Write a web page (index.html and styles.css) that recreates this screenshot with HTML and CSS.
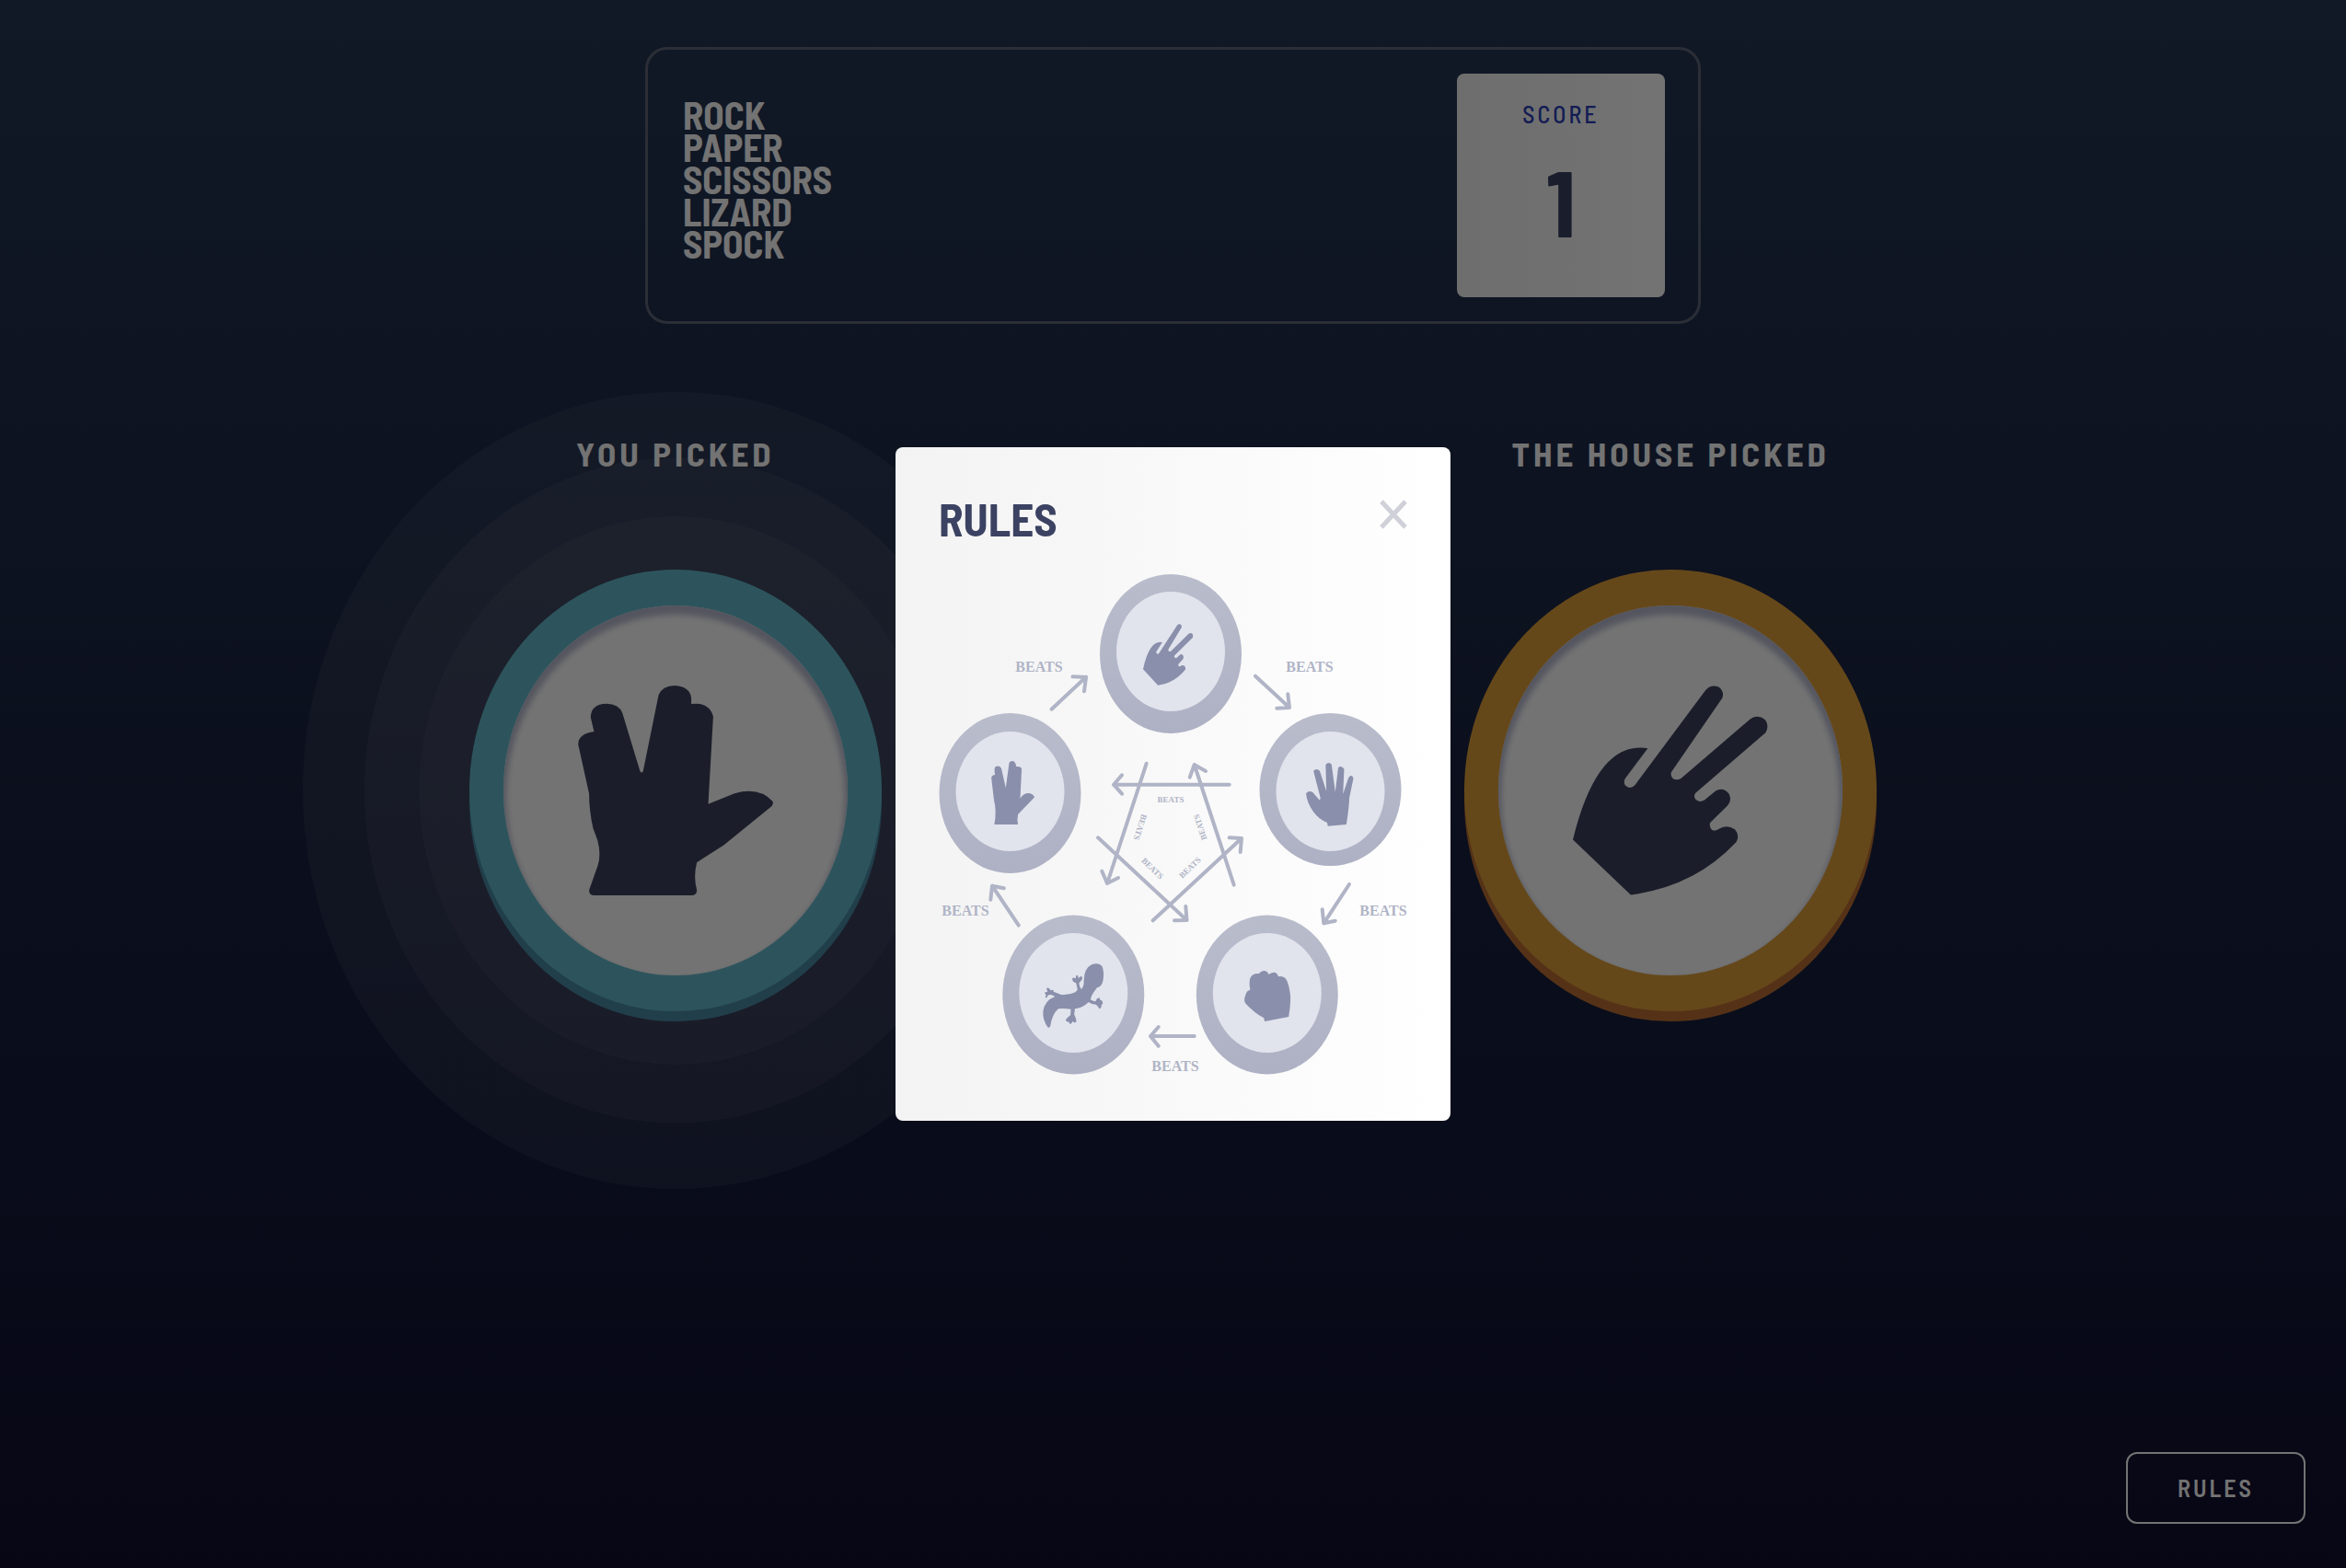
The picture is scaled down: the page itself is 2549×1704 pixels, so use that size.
FILE: index.html
```html
<!DOCTYPE html>
<html lang="en">
<head>
<meta charset="utf-8">
<meta name="viewport" content="width=device-width, initial-scale=1">
<title>Rock Paper Scissors Lizard Spock</title>
<link rel="stylesheet" href="styles.css">
</head>
<body>
<svg class="sprite" aria-hidden="true">
  <symbol id="spock" viewBox="448 685 632 510" preserveAspectRatio="none">
    <path d="M498 1195Q484 1194 484 1182L512 1123Q524 1095 511 1060L497 1032Q484 990 484 948L449 829Q447 803 500 797L489 762Q490 730 540 729Q582 730 592 752L649 893Q654 900 659 893L709 708Q720 686 762 685Q812 688 815 716L815 730Q872 724 886 760L870 973L955 947Q1035 930 1079 967Q1081 973 1076 978L920 1073L833 1115Q821 1150 833 1182Q834 1193 820 1195Z"/>
  </symbol>
  <symbol id="scissors" viewBox="420 683 641 508" preserveAspectRatio="none">
    <path d="M420 1056Q500 815 666 835L592 908Q585 916 592 925Q607 936 623 925L856 694Q875 679 900 687Q918 698 911 713L744 892Q738 901 750 909Q762 913 775 908L996 768Q1025 750 1052 766Q1066 782 1053 797L823 943Q815 950 823 959Q835 967 851 961L889 938Q912 928 932 944Q944 960 928 974L871 1015Q867 1025 876 1032Q889 1037 900 1030Q925 1018 952 1031Q969 1045 957 1062Q820 1170 610 1190Z"/>
  </symbol>
</svg>

<div class="game">
  <header class="header">
    <h1 class="logo">Rock<br>Paper<br>Scissors<br>Lizard<br>Spock</h1>
    <div class="score">
      <span class="score-label">Score</span>
      <span class="score-value">1</span>
    </div>
  </header>

  <main class="picks">
    <section class="pick">
      <h2 class="pick-title">You picked</h2>
      <div class="token token-spock token-winner">
        <div class="token-face"><svg class="token-icon" role="img" aria-label="Spock"><use href="#spock" width="100%" height="100%"/></svg></div>
      </div>
    </section>
    <section class="pick">
      <h2 class="pick-title">The house picked</h2>
      <div class="token token-scissors">
        <div class="token-face"><svg class="token-icon" role="img" aria-label="Scissors"><use href="#scissors" width="100%" height="100%"/></svg></div>
      </div>
    </section>
  </main>

  <footer class="footer">
    <button class="rules-button" type="button">Rules</button>
  </footer>
</div>

<div class="overlay">
  <div class="modal" role="dialog" aria-modal="true" aria-labelledby="rules-title">
    <div class="modal-head">
      <h2 class="modal-title" id="rules-title">Rules</h2>
      <button class="close" type="button" aria-label="Close">
        <svg viewBox="0 0 32 34" width="32" height="34"><path d="M3 3L29 31M29 3L3 31"/></svg>
      </button>
    </div>
    <svg class="diagram" viewBox="0 0 510 546">
      <defs>
        <linearGradient id="rim" x1="0" y1="0" x2="0" y2="1">
          <stop offset="0" stop-color="#b9bccb"/><stop offset="1" stop-color="#aeb1c4"/>
        </linearGradient>
      </defs>
      <g fill="url(#rim)">
        <ellipse cx="252" cy="86.5" rx="77" ry="86.5"/>
        <ellipse cx="425.5" cy="234" rx="77" ry="83"/>
        <ellipse cx="77.5" cy="238" rx="77" ry="87"/>
        <ellipse cx="146.3" cy="457" rx="77" ry="86.5"/>
        <ellipse cx="356.8" cy="457" rx="77" ry="86.5"/>
      </g>
      <g fill="#e1e4ed">
        <ellipse cx="252" cy="84" rx="59" ry="65"/>
        <ellipse cx="425.5" cy="236" rx="59" ry="65"/>
        <ellipse cx="77.5" cy="236" rx="59" ry="65"/>
        <ellipse cx="146.3" cy="455" rx="59" ry="65"/>
        <ellipse cx="356.8" cy="455" rx="59" ry="65"/>
      </g>
      <g fill="#8a8fab">
        <use href="#scissors" x="222" y="54" width="54.5" height="67"/>
        <g transform="translate(-61 135) scale(.4018 .3333)">
          <path d="M302 411L366 411Q363 395 366 378L411 322C405 306 385 302 372 326L376 230Q374 220 361 222Q360 205 351 204Q343 205 342 212L333 292L321 228Q316 218 306 222Q300 226 304 249Q295 250 294 259L301 330Q309 370 302 411Z"/>
          <path d="M1204 416L1254 411Q1261 360 1262 325L1273 260Q1271 250 1265 252L1260 258L1245 312L1248 230Q1240 217 1232 226L1224 305L1214 215Q1206 205 1198 216L1200 302L1182 236Q1174 226 1165 236L1184 325L1182 332L1163 306Q1152 298 1145 310Q1147 340 1165 370Q1180 395 1202 405Z"/>
          <path d="M1033 1053L1098 1038Q1106 980 1101 955Q1097 925 1089 912Q1080 904 1070 907Q1066 890 1055 894Q1048 896 1044 900Q1040 887 1030 888Q1022 890 1018 897Q1000 895 994 912Q990 925 994 950Q984 952 981 968Q975 985 982 995Q1005 1025 1031 1042Z"/>
          <path d="M448 1074Q432 1050 434 1020Q438 985 466 972Q455 962 447 968L443 977Q438 975 442 967L438 960Q441 956 446 956L443 945Q450 940 454 952Q464 948 462 956Q475 962 483 966Q505 968 521 958L527 950Q526 940 523 928Q512 925 513 913Q518 908 521 914L524 902Q530 902 529 912L537 905Q543 910 538 918Q534 925 531 928Q532 942 537 948Q545 940 544 920Q545 880 565 868Q582 860 593 872Q600 890 596 920Q592 940 580 943Q572 955 565 970L562 982Q570 988 576 988Q578 978 586 976L589 984Q596 984 594 990Q598 996 592 998Q592 1010 586 1012Q580 1000 577 998Q565 998 557 990Q540 1010 520 1012L518 1030Q524 1045 524 1054Q518 1060 514 1052L509 1062Q504 1060 503 1054Q496 1056 495 1048Q500 1040 508 1032L509 1013Q490 1010 475 1012Q458 1030 453 1070Z"/>
        </g>
      </g>
      <g class="arrows">
        <path d="M122.6 146.7L160 111.7M145.5 111.3L160 112L158 127.3"/>
        <path d="M344 110.7L381 145M367.3 145.7L381 145L379.3 130.3"/>
        <path d="M446 337L418.3 379.3M416.7 364.3L418.3 379.3L430.8 376.7"/>
        <path d="M277.7 502H230M238.7 492L230 502L238.7 512.7"/>
        <path d="M86.8 381.7L58 338.7M56.3 353.7L58 338.7L70.8 341.3"/>
        <path d="M315.7 228.7H190M199 218.3L190 228.7L199 238.7"/>
        <path d="M225.7 205.7L183 336M177.3 322.7L183 336L195 330"/>
        <path d="M320.7 337.7L277.7 207M272.7 220.7L277.7 207L290 214"/>
        <path d="M173 286.3L269.5 376M256 376.3L269.5 376L268.3 361"/>
        <path d="M232.7 376.3L329 287M315.7 286.3L329 287L327.7 302"/>
      </g>
      <g class="beats">
        <text x="109" y="106">BEATS</text>
        <text x="403" y="106">BEATS</text>
        <text x="29" y="371">BEATS</text>
        <text x="483" y="371">BEATS</text>
        <text x="257" y="540">BEATS</text>
      </g>
      <g class="beats beats-small">
        <text x="252" y="248">BEATS</text>
        <text transform="translate(216 274) rotate(108)">BEATS</text>
        <text transform="translate(287 274) rotate(-108)">BEATS</text>
        <text transform="translate(230 322) rotate(44)">BEATS</text>
        <text transform="translate(275 321) rotate(-44)">BEATS</text>
      </g>
    </svg>
  </div>
</div>
</body>
</html>
```
FILE: styles.css
```css
* {
  box-sizing: border-box;
}

body {
  margin: 0;
  font-family: "Barlow Semi Condensed", "Liberation Sans Narrow", "Roboto Condensed", "Liberation Sans", sans-serif;
  color: #fff;
  text-transform: uppercase;
}

h1,
h2 {
  margin: 0;
}

.sprite {
  position: absolute;
  width: 0;
  height: 0;
}

.game {
  display: flex;
  flex-direction: column;
  min-height: 100vh;
  background: linear-gradient(#263755, #1b2442 50%, #141a39 78%, #120f2f);
}

.header {
  display: flex;
  align-items: center;
  justify-content: space-between;
  width: 45%;
  margin: 51px auto 0;
  padding: 26px 36px 26px 38px;
  border: 3px solid #606779;
  border-radius: 24px;
}

.logo {
  padding-bottom: 14px;
  font-size: 41px;
  font-weight: 700;
  line-height: 35px;
}

.score {
  display: flex;
  flex-direction: column;
  align-items: center;
  width: 226px;
  padding: 26px 0 30px;
  border-radius: 8px;
  background: linear-gradient(90deg, #f3f3f3, #fff);
}

.score-label {
  color: #2c3fb8;
  font-size: 26px;
  font-weight: 500;
  line-height: 36px;
  letter-spacing: 3px;
}

.score-value {
  color: #3b4262;
  font-size: 102px;
  font-weight: 700;
  line-height: 151px;
}

.picks {
  display: flex;
  justify-content: space-between;
  width: 60%;
  margin: 118px auto 0;
}

.pick {
  isolation: isolate;
  display: flex;
  flex-direction: column;
  align-items: center;
  gap: 105px;
}

.pick-title {
  font-size: 37px;
  font-weight: 700;
  line-height: 44px;
  letter-spacing: 4px;
}

.token {
  position: relative;
  display: grid;
  place-items: center;
  width: 448px;
  height: 480px;
  border-radius: 50%;
}

.token-spock {
  background: #64bbcc;
  box-shadow: 0 11px #498ca7;
}

.token-scissors {
  background: #e0a03a;
  box-shadow: 0 11px #bd6f33;
}

.token-winner::before {
  content: "";
  position: absolute;
  z-index: -1;
  inset: -193px -181px;
  border-radius: 50%;
  background: radial-gradient(farthest-side, rgba(255, 255, 255, .15) 68.7%, rgba(255, 255, 255, .11) 68.8% 83.4%, rgba(255, 255, 255, .06) 83.5%);
}

.token-face {
  display: grid;
  place-items: center;
  width: 374px;
  height: 402px;
  border-radius: 50%;
  background: #fff;
  box-shadow: inset 0 7px 6px 3px #babdd2;
}

.token-icon {
  width: 212px;
  height: 228px;
  fill: #3d445e;
}

.footer {
  display: flex;
  justify-content: flex-end;
  margin-top: auto;
  padding: 0 44px 48px;
}

.rules-button {
  width: 195px;
  height: 78px;
  padding: 0;
  border: 2px solid #fff;
  border-radius: 12px;
  background: none;
  color: #fff;
  font: 600 26px/32px "Barlow Semi Condensed", "Liberation Sans Narrow", "Roboto Condensed", "Liberation Sans", sans-serif;
  letter-spacing: 3px;
  text-transform: uppercase;
}

.overlay {
  position: fixed;
  inset: 0;
  display: grid;
  place-items: center;
  background: rgba(0, 0, 0, .55);
}

.modal {
  padding: 48px 46px 48px 47px;
  border-radius: 8px;
  background: linear-gradient(90deg, #f3f3f3, #fff);
}

.modal-head {
  display: flex;
  align-items: flex-start;
  justify-content: space-between;
  margin-bottom: 30px;
}

.modal-title {
  color: #3b4262;
  font-size: 49px;
  font-weight: 700;
  line-height: 60px;
}

.close {
  display: flex;
  margin-top: 8px;
  padding: 0;
  border: 0;
  background: none;
}

.close path {
  fill: none;
  stroke: #cfd0d8;
  stroke-width: 5;
}

.diagram {
  display: block;
  width: 510px;
  height: 546px;
}

.arrows {
  fill: none;
  stroke: #b0b4c6;
  stroke-width: 4;
  stroke-linecap: round;
  stroke-linejoin: round;
}

.beats {
  fill: #b0b4c6;
  font-family: "Liberation Serif", serif;
  font-size: 16px;
  font-weight: 700;
  text-anchor: middle;
}

.beats-small {
  font-size: 9px;
}
```
